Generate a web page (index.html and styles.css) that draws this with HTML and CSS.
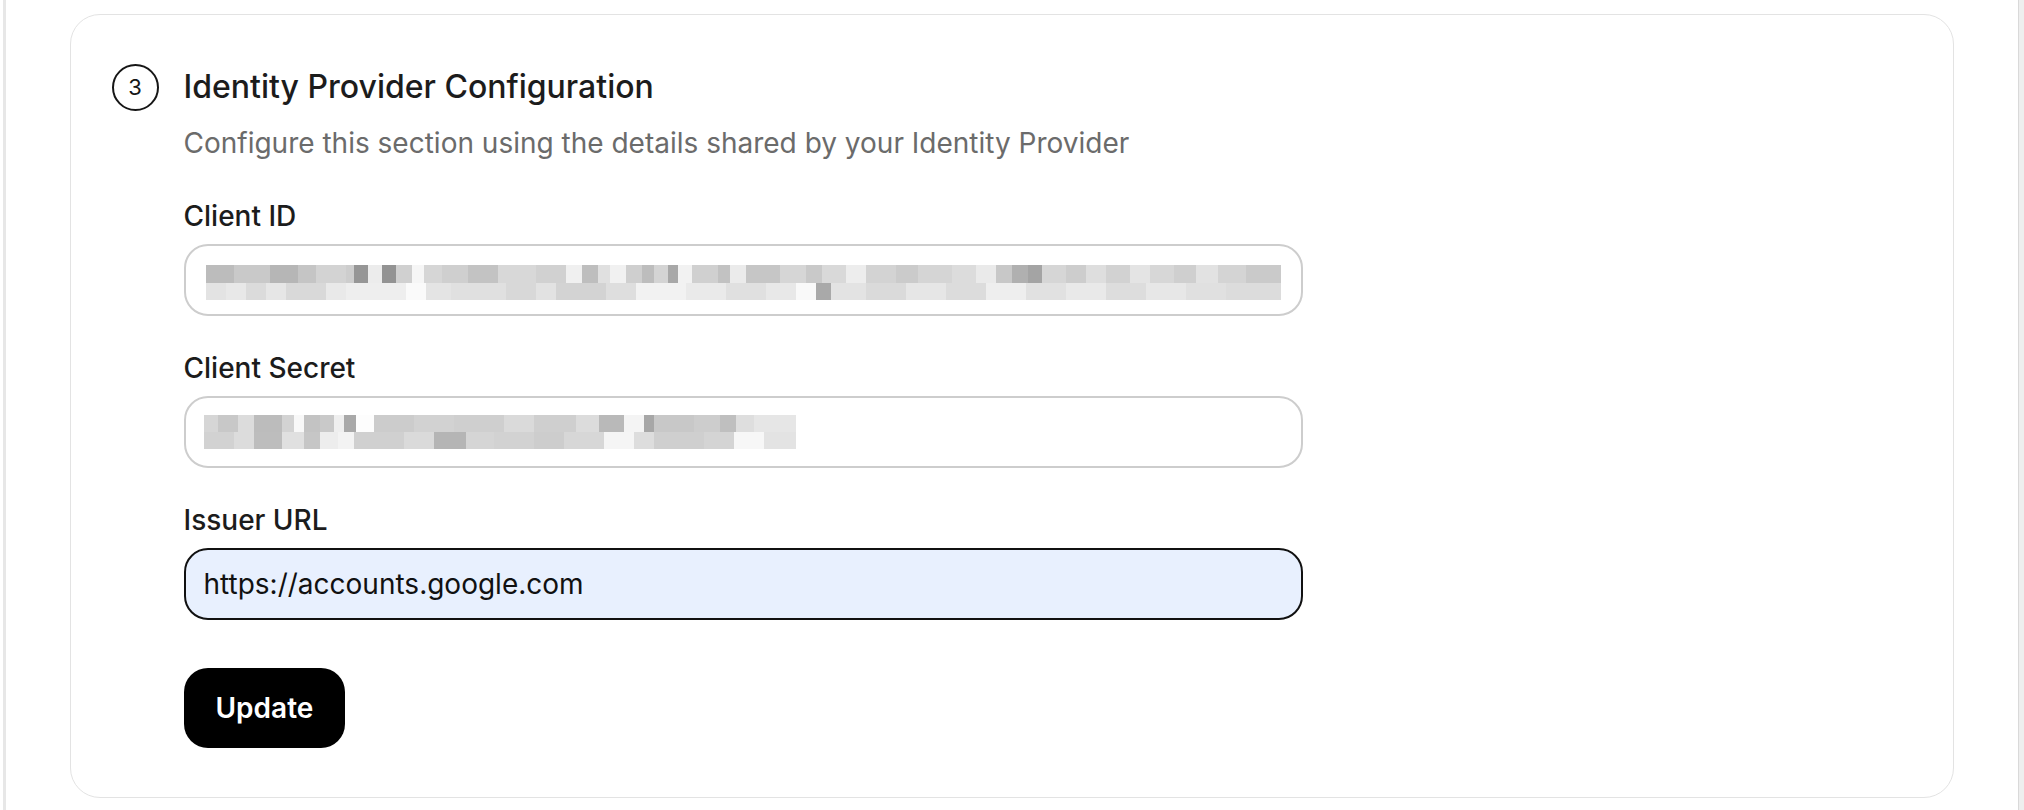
FILE: index.html
```html
<!DOCTYPE html>
<html lang="en">
<head>
<meta charset="utf-8">
<title>Identity Provider Configuration</title>
<link rel="stylesheet" href="styles.css">
</head>
<body>
<div class="shell">
  <main class="main">
    <section class="card">
      <div class="step-head">
        <span class="step-num">3</span>
        <h2 class="step-title">Identity Provider Configuration</h2>
      </div>
      <div class="step-body">
        <p class="step-desc">Configure this section using the details shared by your Identity Provider</p>
        <form class="form">
          <div class="field">
            <label class="label">Client ID</label>
            <div class="input"><span class="redact redact-id"></span></div>
          </div>
          <div class="field">
            <label class="label">Client Secret</label>
            <div class="input"><span class="redact redact-secret"></span></div>
          </div>
          <div class="field">
            <label class="label" for="issuer">Issuer URL</label>
            <input id="issuer" class="input input-focus" type="text" value="https://accounts.google.com">
          </div>
          <div class="actions">
            <button type="button" class="btn">Update</button>
          </div>
        </form>
      </div>
    </section>
  </main>
  <div class="rail"></div>
</div>
</body>
</html>
```

FILE: styles.css
```css
* { box-sizing: border-box; }
html, body { margin: 0; padding: 0; background: #ffffff; }
body {
  font-family: Inter, "Noto Sans", "Liberation Sans", sans-serif;
  color: #1c1c1c;
  height: 810px;
  overflow: hidden;
}
.shell {
  display: flex;
  height: 810px;
  margin-left: 3px;
  border-left: 3px solid #e7e7e7;
}
.main {
  flex: 1;
  padding: 14px 64px 0 64px;
}
.rail {
  width: 6px;
  background: #eeeeee;
  border-left: 1px solid #d9d9d9;
}
.card {
  height: 784px;
  border: 1.5px solid #e3e3e3;
  border-radius: 30px;
  padding: 48.5px 40px 0 40.5px;
}
.step-head {
  display: flex;
  align-items: center;
  gap: 25px;
}
.step-num {
  width: 47px;
  height: 47px;
  border: 2px solid #161616;
  border-radius: 50%;
  display: flex;
  align-items: center;
  justify-content: center;
  font-size: 22px;
  font-weight: 400;
  color: #161616;
  flex: none;
}
.step-title {
  margin: 0;
  font-size: 32px;
  line-height: 40px;
  font-weight: 500;
  color: #1c1c1c;
}
.step-body {
  padding-left: 72px;
}
.step-desc {
  margin: 15px 0 0 0;
  font-size: 28px;
  line-height: 34px;
  color: #6b6b6b;
}
.form {
  margin-top: 39px;
  display: flex;
  flex-direction: column;
  gap: 35px;
  width: 1119px;
}
.field {
  display: flex;
  flex-direction: column;
  gap: 11px;
}
.label {
  font-size: 28px;
  line-height: 34px;
  font-weight: 500;
  color: #1c1c1c;
}
.input {
  display: flex;
  align-items: center;
  height: 72px;
  width: 100%;
  padding: 0 18px;
  border: 2px solid #cdcdcd;
  border-radius: 24px;
  background: #ffffff;
  font-family: inherit;
  font-size: 28px;
  color: #111111;
  outline: none;
}
.input-focus {
  border-color: #111111;
  background: #e8f0fe;
}
.redact { display: block; }
.redact-id {
  width: 1075px;
  height: 35px;
  margin-left: 2px;
  margin-top: 6px;
  background-repeat: no-repeat;
  background-size: 1075px 18px, 1075px 17px;
  background-position: 0 0, 0 18px;
  background-image:
    linear-gradient(to right,
      #bcbcbc 0 28px, #c9c9c9 28px 64px, #b6b6b6 64px 92px, #c5c5c5 92px 110px,
      #d3d3d3 110px 140px, #cdcdcd 140px 148px, #969696 148px 162px, #ececec 162px 176px,
      #939393 176px 190px, #d0d0d0 190px 206px, #f6f6f6 206px 218px, #d6d6d6 218px 236px,
      #cfcfcf 236px 262px, #c3c3c3 262px 292px, #d8d8d8 292px 330px, #d1d1d1 330px 360px,
      #f0f0f0 360px 376px, #bebebe 376px 392px, #e0e0e0 392px 404px, #f1f1f1 404px 420px,
      #cfcfcf 420px 436px, #bdbdbd 436px 448px, #d4d4d4 448px 462px, #a8a8a8 462px 472px,
      #f2f2f2 472px 486px, #d0d0d0 486px 512px, #c2c2c2 512px 524px, #ebebeb 524px 540px,
      #c6c6c6 540px 574px, #d6d6d6 574px 600px, #c9c9c9 600px 616px, #d9d9d9 616px 640px,
      #ededed 640px 660px, #d3d3d3 660px 690px, #cbcbcb 690px 712px, #d5d5d5 712px 746px,
      #dcdcdc 746px 770px, #eaeaea 770px 790px, #c8c8c8 790px 806px, #b0b0b0 806px 822px,
      #a4a4a4 822px 836px, #d6d6d6 836px 860px, #cdcdcd 860px 880px, #dedede 880px 900px,
      #d2d2d2 900px 924px, #e4e4e4 924px 944px, #d7d7d7 944px 968px, #cfcfcf 968px 990px,
      #e2e2e2 990px 1012px, #d4d4d4 1012px 1040px, #cacaca 1040px 1075px),
    linear-gradient(to right,
      #e3e3e3 0 20px, #e8e8e8 20px 40px, #dbdbdb 40px 60px, #e6e6e6 60px 80px,
      #d9d9d9 80px 120px, #e9e9e9 120px 140px, #eeeeee 140px 200px, #fafafa 200px 220px,
      #e4e4e4 220px 245px, #e0e0e0 245px 300px, #d8d8d8 300px 330px, #e2e2e2 330px 350px,
      #d3d3d3 350px 400px, #dedede 400px 430px, #f2f2f2 430px 480px, #eaeaea 480px 520px,
      #e0e0e0 520px 560px, #e8e8e8 560px 590px, #f9f9f9 590px 610px, #a9a9a9 610px 625px,
      #e3e3e3 625px 660px, #dadada 660px 700px, #e6e6e6 700px 740px, #dcdcdc 740px 780px,
      #eeeeee 780px 820px, #e1e1e1 820px 860px, #e9e9e9 860px 900px, #dddddd 900px 940px,
      #e7e7e7 940px 980px, #e0e0e0 980px 1020px, #dcdcdc 1020px 1075px);
}
.redact-secret {
  width: 592px;
  height: 34px;
  background-repeat: no-repeat;
  background-size: 592px 17px, 592px 17px;
  background-position: 0 0, 0 17px;
  background-image:
    linear-gradient(to right,
      #d6d6d6 0 14px, #c8c8c8 14px 34px, #dcdcdc 34px 50px, #bcbcbc 50px 78px,
      #d3d3d3 78px 90px, #f8f8f8 90px 100px, #c3c3c3 100px 116px, #c9c9c9 116px 130px,
      #efefef 130px 140px, #a9a9a9 140px 152px, #fdfdfd 152px 170px, #cccccc 170px 210px,
      #d2d2d2 210px 250px, #cfcfcf 250px 300px, #dadada 300px 330px, #cfcfcf 330px 372px,
      #dcdcdc 372px 395px, #b9b9b9 395px 420px, #f4f4f4 420px 440px, #a7a7a7 440px 450px,
      #c8c8c8 450px 490px, #cdcdcd 490px 516px, #bfbfbf 516px 532px, #dedede 532px 550px,
      #e6e6e6 550px 592px),
    linear-gradient(to right,
      #d2d2d2 0 30px, #dcdcdc 30px 50px, #bdbdbd 50px 78px, #e0e0e0 78px 100px,
      #c6c6c6 100px 116px, #ededed 116px 134px, #f3f3f3 134px 150px, #d0d0d0 150px 200px,
      #dadada 200px 230px, #b5b5b5 230px 262px, #d5d5d5 262px 290px, #d2d2d2 290px 330px,
      #cdcdcd 330px 360px, #d7d7d7 360px 400px, #f5f5f5 400px 430px, #dddddd 430px 450px,
      #cfcfcf 450px 500px, #d4d4d4 500px 530px, #f7f7f7 530px 560px, #e3e3e3 560px 592px);
}
.actions {
  margin-top: 13px;
  display: flex;
}
.btn {
  height: 80px;
  padding: 0 32px;
  border: none;
  border-radius: 24px;
  background: #000000;
  color: #ffffff;
  font-family: inherit;
  font-size: 28px;
  font-weight: 600;
  cursor: pointer;
}
```
